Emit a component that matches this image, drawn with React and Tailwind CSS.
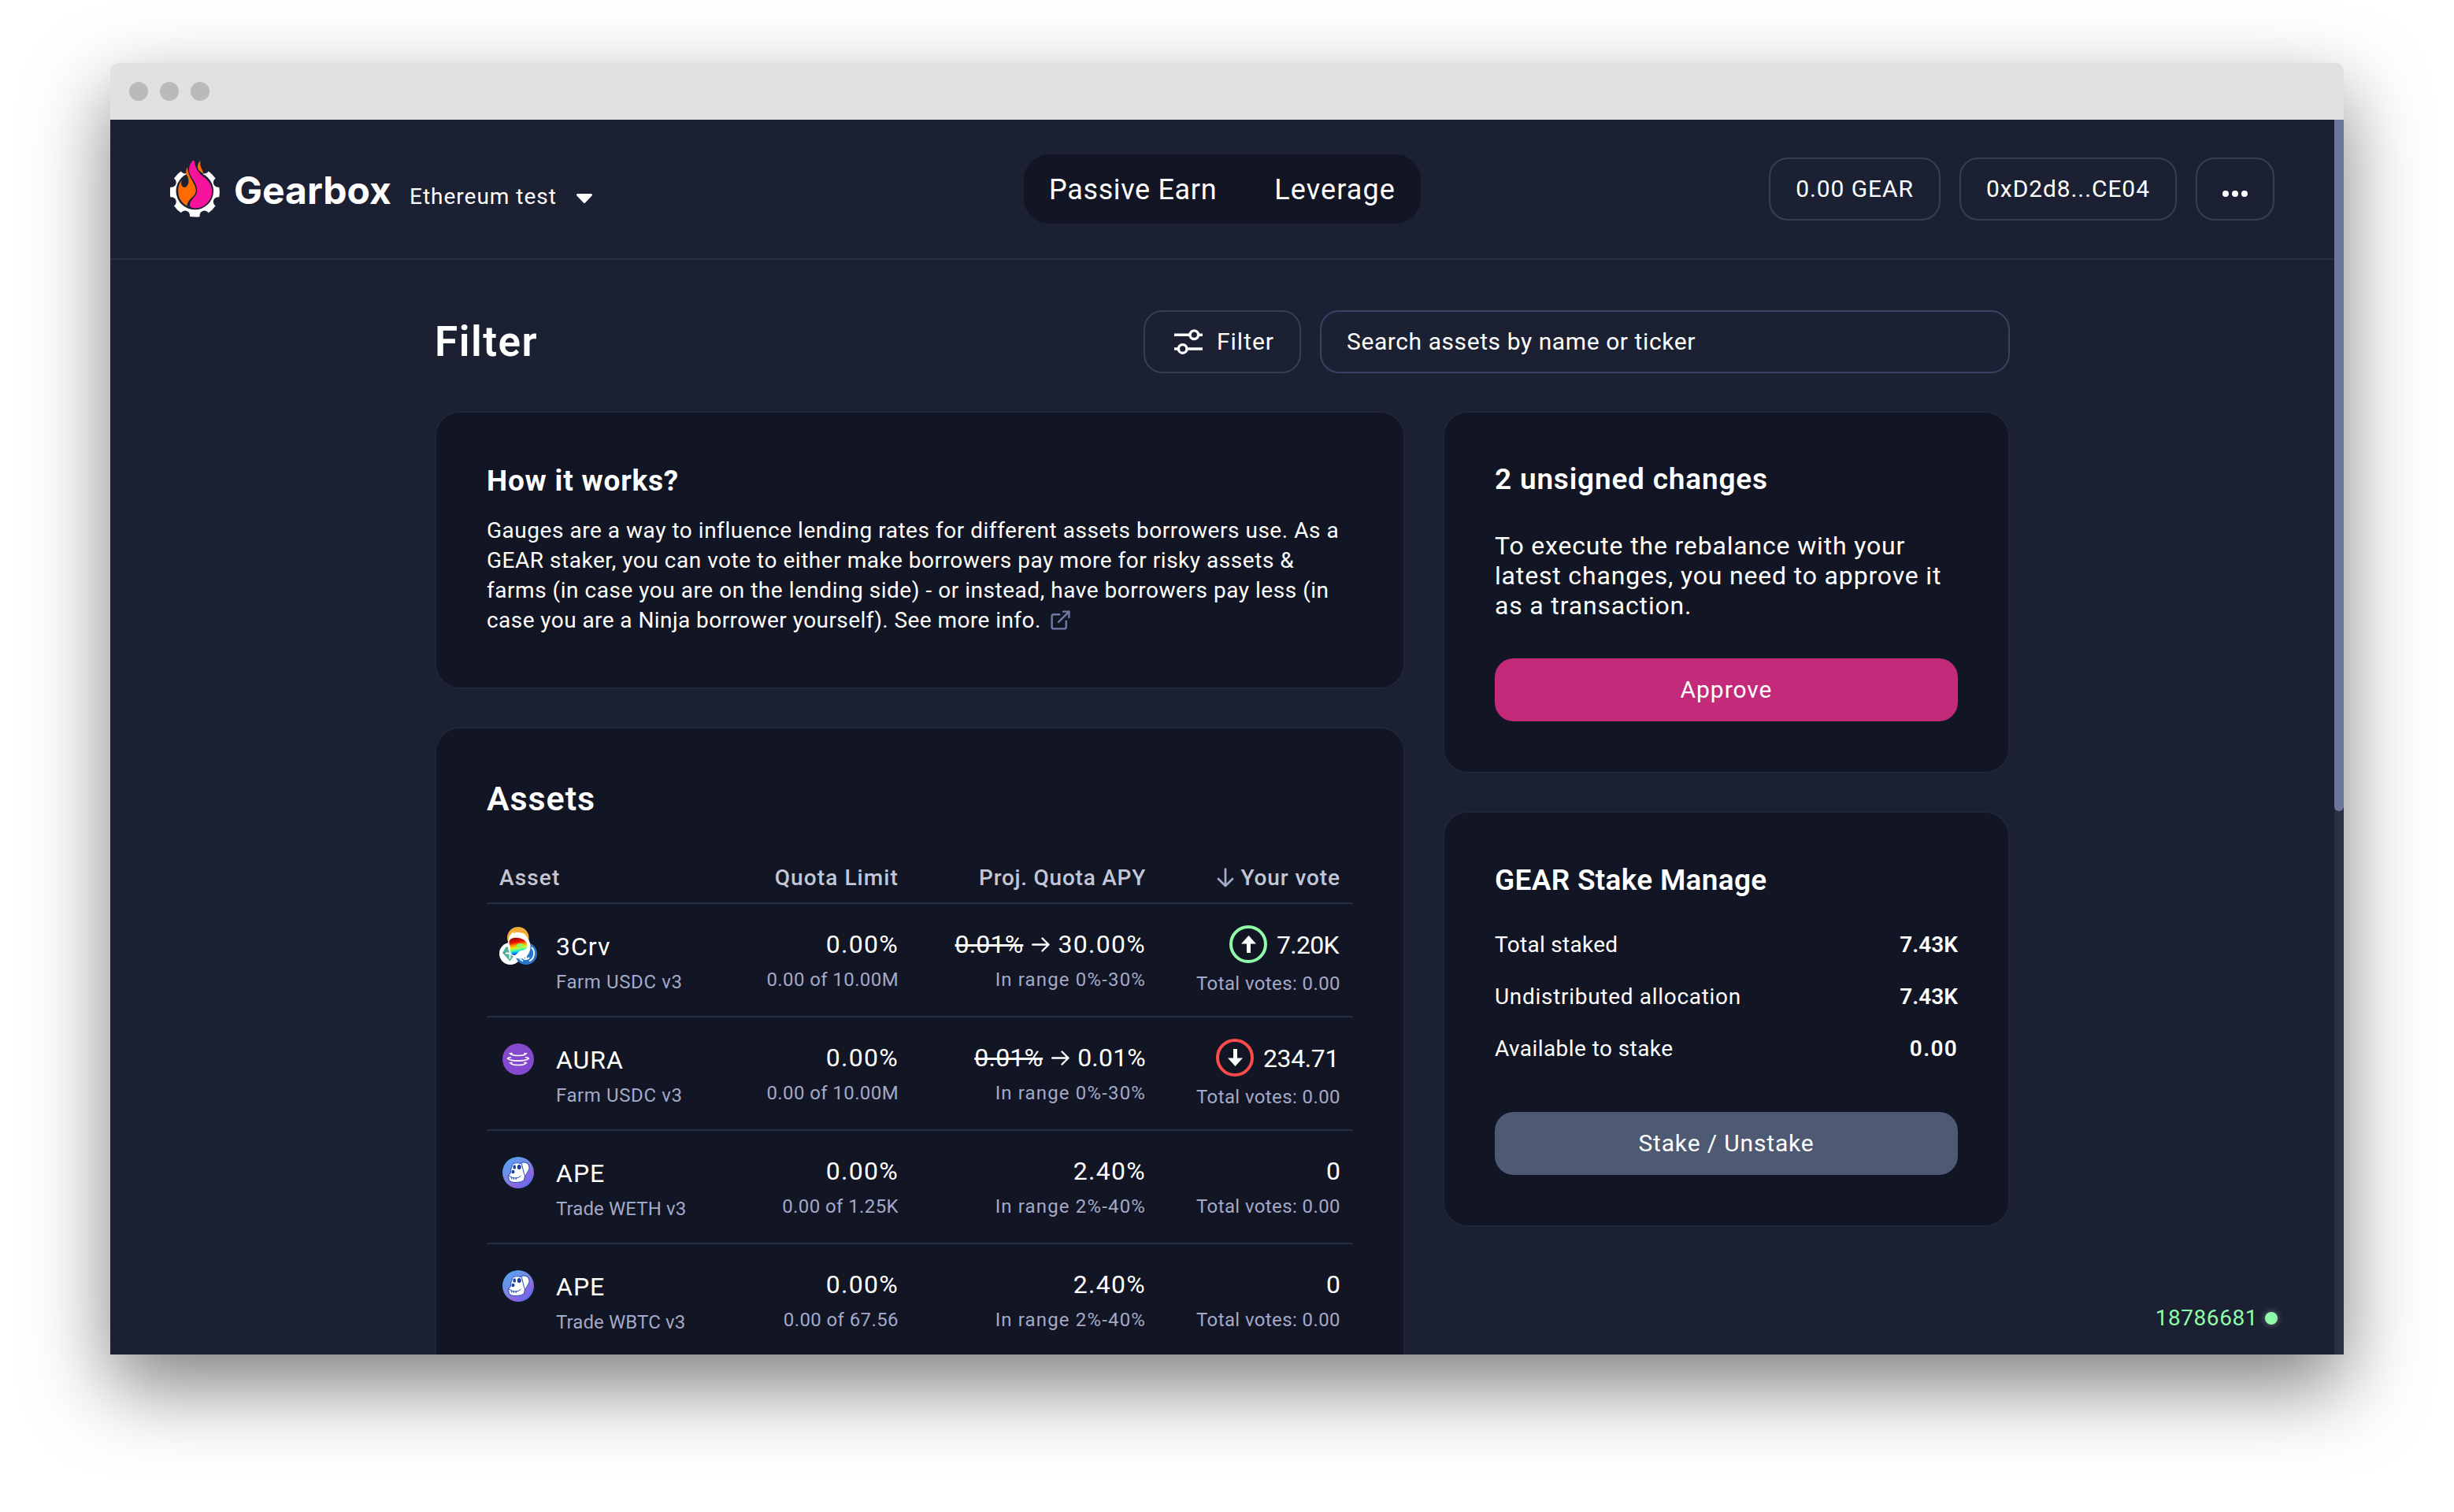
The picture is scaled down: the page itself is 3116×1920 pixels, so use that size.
import React from "react";
import { ExternalLink } from "lucide-react";

const PAGE = "#1b2032";

function GearboxLogo() {
  const notches = [22.5, 67.5, 112.5, 157.5, 202.5, 247.5, 292.5, 337.5].map((deg) => {
    const a = (deg * Math.PI) / 180;
    return [31.3 + 32 * Math.cos(a), 40 + 32 * Math.sin(a)];
  });
  return (
    <svg width="64" height="72" viewBox="0 0 64 72" className="shrink-0">
      <circle cx="31.3" cy="40" r="31.6" fill="#fff" />
      {notches.map(([x, y], i) => (
        <circle key={i} cx={x} cy={y} r="6" fill={PAGE} />
      ))}
      <path d="M31.3 40 19 12 16 4 46 4 44 12Z" fill={PAGE} />
      <circle cx="31.3" cy="38.5" r="23.800" fill={PAGE} />
      <path d="M12 54a24.5 24.5 0 0 0 38.600 0" fill="none" stroke="#fff" strokeWidth="1" />
      <path d="M28.600 0c-4 4.500-5 9-4.300 14 1 7 9.700 14 10 23 .2 10-9.300 11-9.500 20.500 2 2 4.300 3 6.700 3C44 60.500 53.300 50 53.300 39 53 26 44 23 37 15.500 33 11 31.500 6 30.500 0Z" fill="#f8139d" />
      <path d="M22 8c-2.500 5-2.200 8 0 12 2.300 4.500 1.800 9-.5 12-2 2.700-5.500 2.300-6.700-.5-.8-2-.8-4.200-.3-7-3 4.500-4.500 9-4.300 14.500.2 8.500 4.500 15 11.300 18.500C22 48 32.500 46.500 32.800 38 33 29 22 21 22 8Z" fill="#ff6b00" />
      <path d="M38.500 0c-3 3-4.500 7-3 10.500 1.500 3 4.500 4.300 6.700 6.500-.2-6-5.500-9.500-3.700-17Z" fill="#ff6b00" />
    </svg>
  );
}

function ThreeCrvIcon() {
  return (
    <svg width="48" height="48" viewBox="0 0 48 48">
      <defs>
        <linearGradient id="crv" x1="0.15" y1="0" x2="0.35" y2="1">
          <stop offset="0" stopColor="#8e0000" />
          <stop offset="0.3" stopColor="#f01400" />
          <stop offset="0.45" stopColor="#ff9a00" />
          <stop offset="0.6" stopColor="#e8f020" />
          <stop offset="0.74" stopColor="#3dffb0" />
          <stop offset="0.86" stopColor="#00a8ff" />
          <stop offset="1" stopColor="#0a1fb8" />
        </linearGradient>
      </defs>
      <circle cx="23.800" cy="13.800" r="13.800" fill="#f5ac37" />
      <circle cx="14" cy="34" r="14" fill="#fff" />
      <path d="M8.500 25.500h8.500l5 7-8.500 11L4 33Z" fill="#50af95" />
      <path d="M8 33.500h11M13.500 33.500v7" stroke="#fff" strokeWidth="2" />
      <circle cx="34" cy="34" r="14" fill="#2775ca" />
      <path d="M41 26a11 11 0 0 1-3 17.500M30 43.500a11 11 0 0 1-4-3M30 39.500q4 3.500 8-.5M34 36v6" stroke="#fff" strokeWidth="1.800" fill="none" />
      <path d="M17 7q7-2 14 1c3 3 8.500 9 8.500 17 0 9-6 15.500-13 15.500S11 35 11 25 12 11 17 7Z" fill="#fff" />
      <path d="M18 7.500q6-2 11 0" stroke="#f5ac37" strokeWidth="1.200" fill="none" />
      <path d="M13 17c3-4 9-3.500 14-2.500 5 1.500 8.500 5 8.500 9.500s-4.500 5.500-9 6.500c-3.500 1-4 5.500-7.500 5.500-4 0-5-4-5-8.500 0-4-2.500-7-1-10.500Z" fill="url(#crv)" />
      <path d="M22 22.500c3-2 7.500-2 9 .3 1 2.500-5 3.500-9 3.200Z" fill="#7dff6a" opacity="0.85" />
    </svg>
  );
}

function AuraIcon() {
  return (
    <svg width="40" height="40" viewBox="0 0 40 40">
      <circle cx="20" cy="20" r="20" fill="#8549cf" />
      <g fill="none" stroke="#fff" strokeWidth="1.600" strokeLinecap="round">
        <path d="M12 12.600l-2.300.2q2 2.700 10.300 2.700t10.300-2.700l-2.300-.2" />
        <path d="M10.500 17.800q-3.700.4-3.900 1.400 3 2.900 13.400 2.900t13.400-2.900q-.2-1-3.900-1.400" />
        <path d="M12 24.200l-2.200.5q2.300 2.800 10.200 2.800t10.200-2.800l-2.200-.5" />
      </g>
    </svg>
  );
}

function ApeIcon() {
  return (
    <svg width="40" height="40" viewBox="0 0 40 40">
      <defs>
        <linearGradient id="ape" x1="0.1" y1="0.1" x2="0.75" y2="0.95">
          <stop offset="0" stopColor="#4fa6fb" />
          <stop offset="0.5" stopColor="#7b86dd" />
          <stop offset="0.75" stopColor="#8a66e0" />
          <stop offset="1" stopColor="#5d6df2" />
        </linearGradient>
      </defs>
      <circle cx="20" cy="20" r="20" fill="url(#ape)" />
      <circle cx="20" cy="20" r="16.500" fill="none" stroke="#a06fd0" strokeWidth="0.600" opacity="0.6" />
      <g stroke="#1f4db5" strokeWidth="1" strokeLinejoin="round">
        <path d="M20 9q8-4 12.500 0 3.500 6-1 10.500-1 4-3.500 4.500l-6-6Z" fill="#fff" />
        <path d="M13.500 8.500q6-2 11 .5l2.500 11 1.500 4-1 5.500q-3 3-9.500 3-7 .5-9.500-3l-1-5.500 3-4 .5-5Z" fill="#fff" />
        <path d="M8 23.500q3.500 3.500 8 3.500 4.500.5 7.500-3M10.500 25l1.500 3.500M13.500 26l1 3M17 26.500l.5 2.500" fill="none" />
      </g>
      <ellipse cx="15.200" cy="13" rx="1.800" ry="2.800" fill="#1a3f9e" />
      <ellipse cx="21.300" cy="13" rx="2.500" ry="3" fill="#1a3f9e" />
      <ellipse cx="13.500" cy="19" rx="2" ry="2.200" fill="#1a3f9e" />
    </svg>
  );
}

function SlidersIcon() {
  return (
    <svg width="36" height="32" viewBox="0 0 36 32" fill="none" stroke="#fff" strokeWidth="3.600">
      <path d="M0 7.300h19.500M31 7.300h5M0 25h4.800M16.500 25H36" />
      <circle cx="25.300" cy="7.200" r="5.300" strokeWidth="3.400" />
      <circle cx="10.700" cy="24.900" r="5.300" strokeWidth="3.400" />
    </svg>
  );
}

function RightArrow() {
  return (
    <svg width="23" height="19" viewBox="0 0 23 19" fill="none" stroke="#fff" strokeWidth="2.400" strokeLinecap="round" strokeLinejoin="round">
      <path d="M1.200 9.500h20.300M13.500 1.500l8 8-8 8" />
    </svg>
  );
}

function VoteBadge({ up }) {
  return (
    <div className={up ? "flex h-12 w-12 items-center justify-center rounded-full border-4 border-[#90fcaa]" : "flex h-12 w-12 items-center justify-center rounded-full border-4 border-[#fb4b4b]"}>
      <svg width="19" height="22" viewBox="0 0 19 22" fill="#fff">
        <path d={up ? "M9.500 0 19 10.500H12V22H7V10.500H0Z" : "M9.500 22 19 11.500H12V0H7V11.500H0Z"} />
      </svg>
    </div>
  );
}

const ICONS = { crv: ThreeCrvIcon, aura: AuraIcon, ape: ApeIcon };

const ROWS = [
  { icon: "crv", name: "3Crv", pool: "Farm USDC v3", of: "0.00 of 10.00M", old: "0.01%", apy: "30.00%", range: "In range 0%-30%", dir: "up", vote: "7.20K" },
  { icon: "aura", name: "AURA", pool: "Farm USDC v3", of: "0.00 of 10.00M", old: "0.01%", apy: "0.01%", range: "In range 0%-30%", dir: "down", vote: "234.71" },
  { icon: "ape", name: "APE", pool: "Trade WETH v3", of: "0.00 of 1.25K", apy: "2.40%", range: "In range 2%-40%", vote: "0" },
  { icon: "ape", name: "APE", pool: "Trade WBTC v3", of: "0.00 of 67.56", apy: "2.40%", range: "In range 2%-40%", vote: "0" },
];

const COLS = "grid grid-cols-[290px_248px_314px_248px] border-b-2 border-[#252d40]";
const CELL = "flex flex-col items-end pt-8 pr-[15px]";
const VALUE = "text-[32px] leading-[38px]";
const SUB = "mt-[10px] text-[24px] leading-8 text-[#a2a9c8]";

function AssetRow({ row }) {
  const Icon = ICONS[row.icon];
  return (
    <div className={COLS + " h-36"}>
      <div className="flex pl-4">
        <div className="mt-[29px] flex h-12 w-12 items-center justify-center">
          <Icon />
        </div>
        <div className="ml-6 pt-8 whitespace-nowrap">
          <div className="text-[32px] leading-[44px] tracking-[1px]">{row.name}</div>
          <div className={row.icon === "ape" ? "mt-[7px] text-[24px] leading-8 tracking-[0.1px] text-[#a2a9c8]" : "mt-[7px] text-[24px] leading-8 tracking-[0.6px] text-[#a2a9c8]"}>{row.pool}</div>
        </div>
      </div>
      <div className={CELL}>
        <div className={VALUE + " tracking-[1.3px]"}>0.00%</div>
        <div className={SUB + " tracking-[0.4px]"}>{row.of}</div>
      </div>
      <div className={CELL}>
        <div className="flex items-center">
          {row.old && (
            <>
              <span className={VALUE + " mr-[11px] tracking-[0.2px] line-through decoration-[3px]"}>{row.old}</span>
              <RightArrow />
              <span className="w-[10px]" />
            </>
          )}
          <span className={VALUE + (row.apy === "0.01%" ? " tracking-[0.2px]" : " tracking-[1.3px]")}>{row.apy}</span>
        </div>
        <div className={SUB + " tracking-[1.15px]"}>{row.range}</div>
      </div>
      {row.dir ? (
        <div className="flex flex-col items-end pt-[27px] pr-4">
          <div className="flex h-12 items-center gap-3 pr-0.5">
            <VoteBadge up={row.dir === "up"} />
            <span className={row.dir === "up" ? "pt-0.5 text-[32px] leading-[38px] tracking-[-0.7px]" : "pt-0.5 text-[32px] leading-[38px] tracking-[-0.4px]"}>{row.vote}</span>
          </div>
          <div className={SUB + " tracking-[0.4px]"}>Total votes: 0.00</div>
        </div>
      ) : (
        <div className="flex flex-col items-end pt-8 pr-4">
          <div className={VALUE}>{row.vote}</div>
          <div className={SUB + " tracking-[0.4px]"}>Total votes: 0.00</div>
        </div>
      )}
    </div>
  );
}

const CARD = "rounded-[32px] border-2 border-[#1f2637] bg-[#121523]";
const PILL = "flex h-20 items-center justify-center rounded-3xl border-2 border-[#373f54] text-[30px]";

function Header() {
  return (
    <header className="grid h-[178px] shrink-0 grid-cols-[1fr_504px_1fr] items-center border-b-2 border-[#292f41] px-[76px]">
      <div className="flex items-center whitespace-nowrap">
        <GearboxLogo />
        <div className="ml-[17px] w-[223px] pt-1 font-['Inter',sans-serif] text-[48px] leading-[56px] font-bold">Gearbox</div>
        <div className="w-[212px] pt-5 text-[28px] leading-9 tracking-[1px]">Ethereum test</div>
        <svg width="20" height="12" viewBox="0 0 20 12" className="mt-6">
          <path d="M1.500 1.500h17L10 10.500Z" fill="#fff" stroke="#fff" strokeWidth="3" strokeLinejoin="round" />
        </svg>
      </div>
      <nav className="flex h-[88px] items-center justify-between rounded-[32px] bg-[#121523] px-8 pt-0.5 text-[36px]">
        <span className="tracking-[0.65px]">Passive Earn</span>
        <span className="tracking-[1.1px]">Leverage</span>
      </nav>
      <div className="flex justify-end gap-6">
        <div className={PILL + " w-[218px] pb-0.5 tracking-[0.9px]"}>0.00 GEAR</div>
        <div className={PILL + " w-[276px] pb-0.5 tracking-[0.9px]"}>0xD2d8...CE04</div>
        <div className={PILL + " w-[100px] gap-1 pt-3"}>
          <span className="h-2 w-2 rounded-full bg-white" />
          <span className="h-2 w-2 rounded-full bg-white" />
          <span className="h-2 w-2 rounded-full bg-white" />
        </div>
      </div>
    </header>
  );
}

function StakeLine({ label, value, labelClass = "", valueClass = "" }) {
  return (
    <div className="flex h-[66px] items-center justify-between pt-px text-[28px]">
      <span className={labelClass}>{label}</span>
      <span className={"font-semibold " + valueClass}>{value}</span>
    </div>
  );
}

export default function App() {
  return (
    <div className="h-[1920px] w-[3116px] overflow-hidden bg-white px-[140px] pt-20 font-['Roboto',sans-serif] text-white">
      <div className="relative flex h-[1640px] w-[2836px] flex-col rounded-t-[10px] shadow-[0_40px_100px_rgba(0,0,0,0.5)]">
        <div className="flex h-[72px] shrink-0 items-center gap-[15px] rounded-t-[10px] bg-[#e1e1e1] pl-6">
          <span className="h-6 w-6 rounded-full bg-[#bababa]" />
          <span className="h-6 w-6 rounded-full bg-[#bababa]" />
          <span className="h-6 w-6 rounded-full bg-[#bababa]" />
        </div>
        <div className="flex h-[1568px] overflow-hidden bg-[#1b2032]">
          <div className="flex w-[2824px] flex-col">
            <Header />
            <main className="mx-auto w-[2000px] pt-16">
              <div className="flex h-20 items-center gap-6">
                <h1 className="flex-1 pt-0.5 text-[53px] font-semibold tracking-[1.5px]">Filter</h1>
                <div className={PILL + " w-[200px] gap-[18px] pl-[5px]"}>
                  <SlidersIcon />
                  <span className="pb-0.5 tracking-[1px]">Filter</span>
                </div>
                <div className="flex h-20 w-[876px] items-center rounded-3xl border-2 border-[#3a4263] pb-0.5 pl-8 text-[30px] tracking-[0.58px]">Search assets by name or ticker</div>
              </div>
              <div className="mt-12 grid grid-cols-[1232px_720px] gap-12">
                <div className="flex flex-col gap-12">
                  <section className={CARD + " h-[353px] p-16"}>
                    <h2 className="pt-px text-[37px] leading-[44px] font-bold tracking-[0.8px]">How it works?</h2>
                    <p className="mt-[22px] text-[28px] leading-[38px] tracking-[0.53px] whitespace-nowrap">
                      Gauges are a way to influence lending rates for different assets borrowers use. As a<br />
                      GEAR staker, you can vote to either make borrowers pay more for risky assets &amp;<br />
                      farms (in case you are on the lending side) - or instead, have borrowers pay less (in<br />
                      <span className="tracking-[0.43px]">case you are a Ninja borrower yourself). See more info.</span>
                      <ExternalLink size={29} strokeWidth={2} className="-mt-1 ml-2.5 inline-block text-[#707ba4]" />
                    </p>
                  </section>
                  <section className={CARD + " p-16"}>
                    <h2 className="text-[43px] leading-[50px] font-semibold tracking-[0.9px]">Assets</h2>
                    <div className={COLS + " mt-[43px] h-[66px] items-center pt-0.5 text-[28px] font-medium text-[#c3c6d6]"}>
                      <span className="pl-4 tracking-[1.15px]">Asset</span>
                      <span className="pr-[15px] text-right tracking-[1.100px]">Quota Limit</span>
                      <span className="pr-[15px] text-right tracking-[0.75px]">Proj. Quota APY</span>
                      <span className="flex items-center justify-end gap-2 pr-4 tracking-[0.9px]">
                        <svg width="22" height="25" viewBox="0 0 22 25" fill="none" stroke="#a5accb" strokeWidth="2.700" strokeLinecap="round" strokeLinejoin="round" className="-mt-0.5">
                          <path d="M11 1.500v21.500M2 14l9 9 9-9" />
                        </svg>
                        Your vote
                      </span>
                    </div>
                    {ROWS.map((row, i) => (
                      <AssetRow key={i} row={row} />
                    ))}
                  </section>
                </div>
                <div className="flex flex-col gap-12">
                  <section className={CARD + " h-[460px] p-16"}>
                    <h2 className="text-[37px] leading-[42px] font-semibold tracking-[0.8px]">2 unsigned changes</h2>
                    <p className="mt-11 text-[32px] leading-[38px] tracking-[0.83px] whitespace-nowrap">
                      To execute the rebalance with your<br />
                      latest changes, you need to approve it<br />
                      as a transaction.
                    </p>
                    <button className="mt-12 h-20 w-full rounded-3xl bg-[#c32a7a] pb-0.5 text-[30px] tracking-[0.94px]">Approve</button>
                  </section>
                  <section className={CARD + " h-[528px] p-16"}>
                    <h2 className="mb-[27px] pt-px text-[37px] leading-[42px] font-semibold tracking-[0.3px]">GEAR Stake Manage</h2>
                    <StakeLine label="Total staked" value="7.43K" labelClass="tracking-[0.3px]" />
                    <StakeLine label="Undistributed allocation" value="7.43K" labelClass="tracking-[0.7px]" />
                    <StakeLine label="Available to stake" value="0.00" labelClass="tracking-[0.43px]" valueClass="tracking-[1.3px]" />
                    <button className="mt-12 h-20 w-full rounded-3xl bg-[#4e5a73] pb-0.5 text-[30px] tracking-[0.85px]">Stake / Unstake</button>
                  </section>
                </div>
              </div>
            </main>
          </div>
          <div className="w-3 bg-[#2b3042]">
            <div className="h-[878px] rounded-b-[6px] bg-[#6b7799]" />
          </div>
        </div>
        <div className="absolute right-[84px] bottom-[28px] flex h-9 items-center gap-[9px] text-[28px] tracking-[0.55px] text-[#90fcaa]">
          18786681
          <span className="h-4 w-4 rounded-full bg-[#90fcaa] shadow-[0_0_10px_rgba(255,255,255,0.4)]" />
        </div>
      </div>
    </div>
  );
}
